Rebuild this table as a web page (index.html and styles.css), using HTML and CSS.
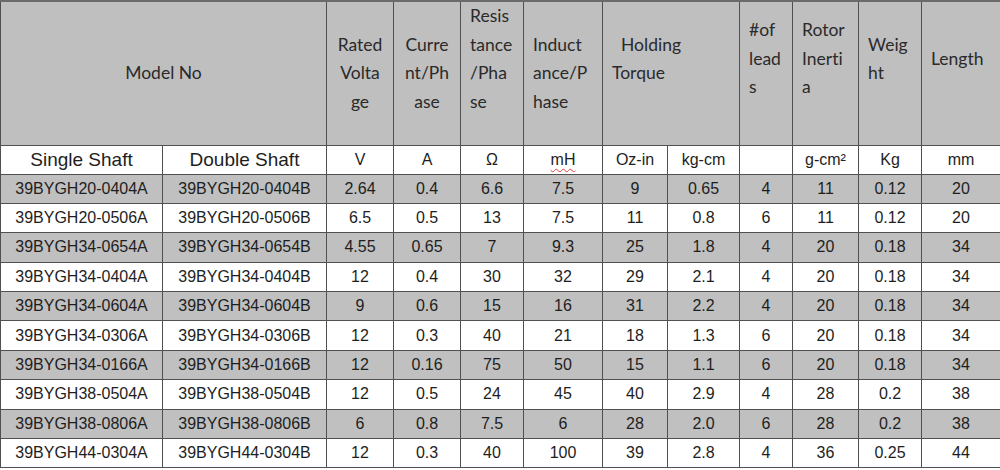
FILE: index.html
```html
<!DOCTYPE html>
<html>
<head>
<meta charset="utf-8">
<link rel="stylesheet" href="styles.css">
</head>
<body>
<table class="spec">
  <colgroup>
    <col class="c-single"><col class="c-double"><col class="c-volt"><col class="c-curr">
    <col class="c-res"><col class="c-ind"><col class="c-oz"><col class="c-kg">
    <col class="c-leads"><col class="c-rotor"><col class="c-weight"><col class="c-len">
  </colgroup>
  <thead>
    <tr class="head">
      <th colspan="2" class="center">Model No</th>
      <th class="center">Rated<br>Volta<br>ge</th>
      <th class="center">Curre<br>nt/Ph<br>ase</th>
      <th>Resis<br>tance<br>/Pha<br>se<br>&nbsp;</th>
      <th>Induct<br>ance/P<br>hase</th>
      <th colspan="2"><span class="indent">Holding</span><br>Torque<br>&nbsp;</th>
      <th>#of<br>lead<br>s<br>&nbsp;</th>
      <th>Rotor<br>Inerti<br>a<br>&nbsp;</th>
      <th>Weig<br>ht<br>&nbsp;</th>
      <th>Length<br>&nbsp;</th>
    </tr>
    <tr class="units">
      <td class="big">Single Shaft</td>
      <td class="big">Double Shaft</td>
      <td>V</td>
      <td>A</td>
      <td>Ω</td>
      <td><span class="spell">mH</span></td>
      <td>Oz-in</td>
      <td>kg-cm</td>
      <td></td>
      <td>g-cm²</td>
      <td>Kg</td>
      <td>mm</td>
    </tr>
  </thead>
  <tbody>
    <tr class="alt"><td>39BYGH20-0404A</td><td>39BYGH20-0404B</td><td>2.64</td><td>0.4</td><td>6.6</td><td>7.5</td><td>9</td><td>0.65</td><td>4</td><td>11</td><td>0.12</td><td>20</td></tr>
    <tr><td>39BYGH20-0506A</td><td>39BYGH20-0506B</td><td>6.5</td><td>0.5</td><td>13</td><td>7.5</td><td>11</td><td>0.8</td><td>6</td><td>11</td><td>0.12</td><td>20</td></tr>
    <tr class="alt"><td>39BYGH34-0654A</td><td>39BYGH34-0654B</td><td>4.55</td><td>0.65</td><td>7</td><td>9.3</td><td>25</td><td>1.8</td><td>4</td><td>20</td><td>0.18</td><td>34</td></tr>
    <tr><td>39BYGH34-0404A</td><td>39BYGH34-0404B</td><td>12</td><td>0.4</td><td>30</td><td>32</td><td>29</td><td>2.1</td><td>4</td><td>20</td><td>0.18</td><td>34</td></tr>
    <tr class="alt"><td>39BYGH34-0604A</td><td>39BYGH34-0604B</td><td>9</td><td>0.6</td><td>15</td><td>16</td><td>31</td><td>2.2</td><td>4</td><td>20</td><td>0.18</td><td>34</td></tr>
    <tr><td>39BYGH34-0306A</td><td>39BYGH34-0306B</td><td>12</td><td>0.3</td><td>40</td><td>21</td><td>18</td><td>1.3</td><td>6</td><td>20</td><td>0.18</td><td>34</td></tr>
    <tr class="alt"><td>39BYGH34-0166A</td><td>39BYGH34-0166B</td><td>12</td><td>0.16</td><td>75</td><td>50</td><td>15</td><td>1.1</td><td>6</td><td>20</td><td>0.18</td><td>34</td></tr>
    <tr><td>39BYGH38-0504A</td><td>39BYGH38-0504B</td><td>12</td><td>0.5</td><td>24</td><td>45</td><td>40</td><td>2.9</td><td>4</td><td>28</td><td>0.2</td><td>38</td></tr>
    <tr class="alt"><td>39BYGH38-0806A</td><td>39BYGH38-0806B</td><td>6</td><td>0.8</td><td>7.5</td><td>6</td><td>28</td><td>2.0</td><td>6</td><td>28</td><td>0.2</td><td>38</td></tr>
    <tr><td>39BYGH44-0304A</td><td>39BYGH44-0304B</td><td>12</td><td>0.3</td><td>40</td><td>100</td><td>39</td><td>2.8</td><td>4</td><td>36</td><td>0.25</td><td>44</td></tr>
  </tbody>
</table>
</body>
</html>
```
FILE: styles.css
```css
html, body {
  margin: 0;
  padding: 0;
  background: #ffffff;
}

.spec {
  width: 1000px;
  border-collapse: collapse;
  table-layout: fixed;
  font-family: "Liberation Sans", Arial, sans-serif;
  color: #1e1e1e;
  border-top: 2px solid #6a6a6a;
}

.c-single { width: 162px; }
.c-double { width: 164px; }
.c-volt { width: 67px; }
.c-curr { width: 67px; }
.c-res { width: 63px; }
.c-ind { width: 79px; }
.c-oz { width: 65px; }
.c-kg { width: 72px; }
.c-leads { width: 53px; }
.c-rotor { width: 66px; }
.c-weight { width: 63px; }
.c-len { width: 79px; }

.spec th,
.spec td {
  border: 1px solid #505050;
  padding: 0;
  overflow: hidden;
  white-space: nowrap;
}

.head {
  height: 143px;
  background: #bfbfbf;
}

.head th {
  font-family: Lato, "Open Sans", sans-serif;
  font-weight: normal;
  font-size: 17.5px;
  line-height: 28.5px;
  color: #2a2a2a;
  text-align: left;
  vertical-align: middle;
  padding-left: 9px;
  font-variant-ligatures: none;
}

.head th.center {
  text-align: center;
  padding-left: 0;
}

.indent {
  margin-left: 9px;
}

.units {
  height: 29px;
  background: #ffffff;
}

.units td {
  text-align: center;
  font-size: 16px;
}

.units td.big {
  font-size: 19px;
}

.spell {
  text-decoration: underline wavy #e04040;
  text-decoration-thickness: 1px;
  text-underline-offset: 3px;
}

tbody tr {
  height: 29.4px;
  background: #ffffff;
}

tbody tr.alt {
  background: #c0c0c0;
}

tbody td {
  text-align: center;
  font-size: 16px;
  vertical-align: middle;
}
```
